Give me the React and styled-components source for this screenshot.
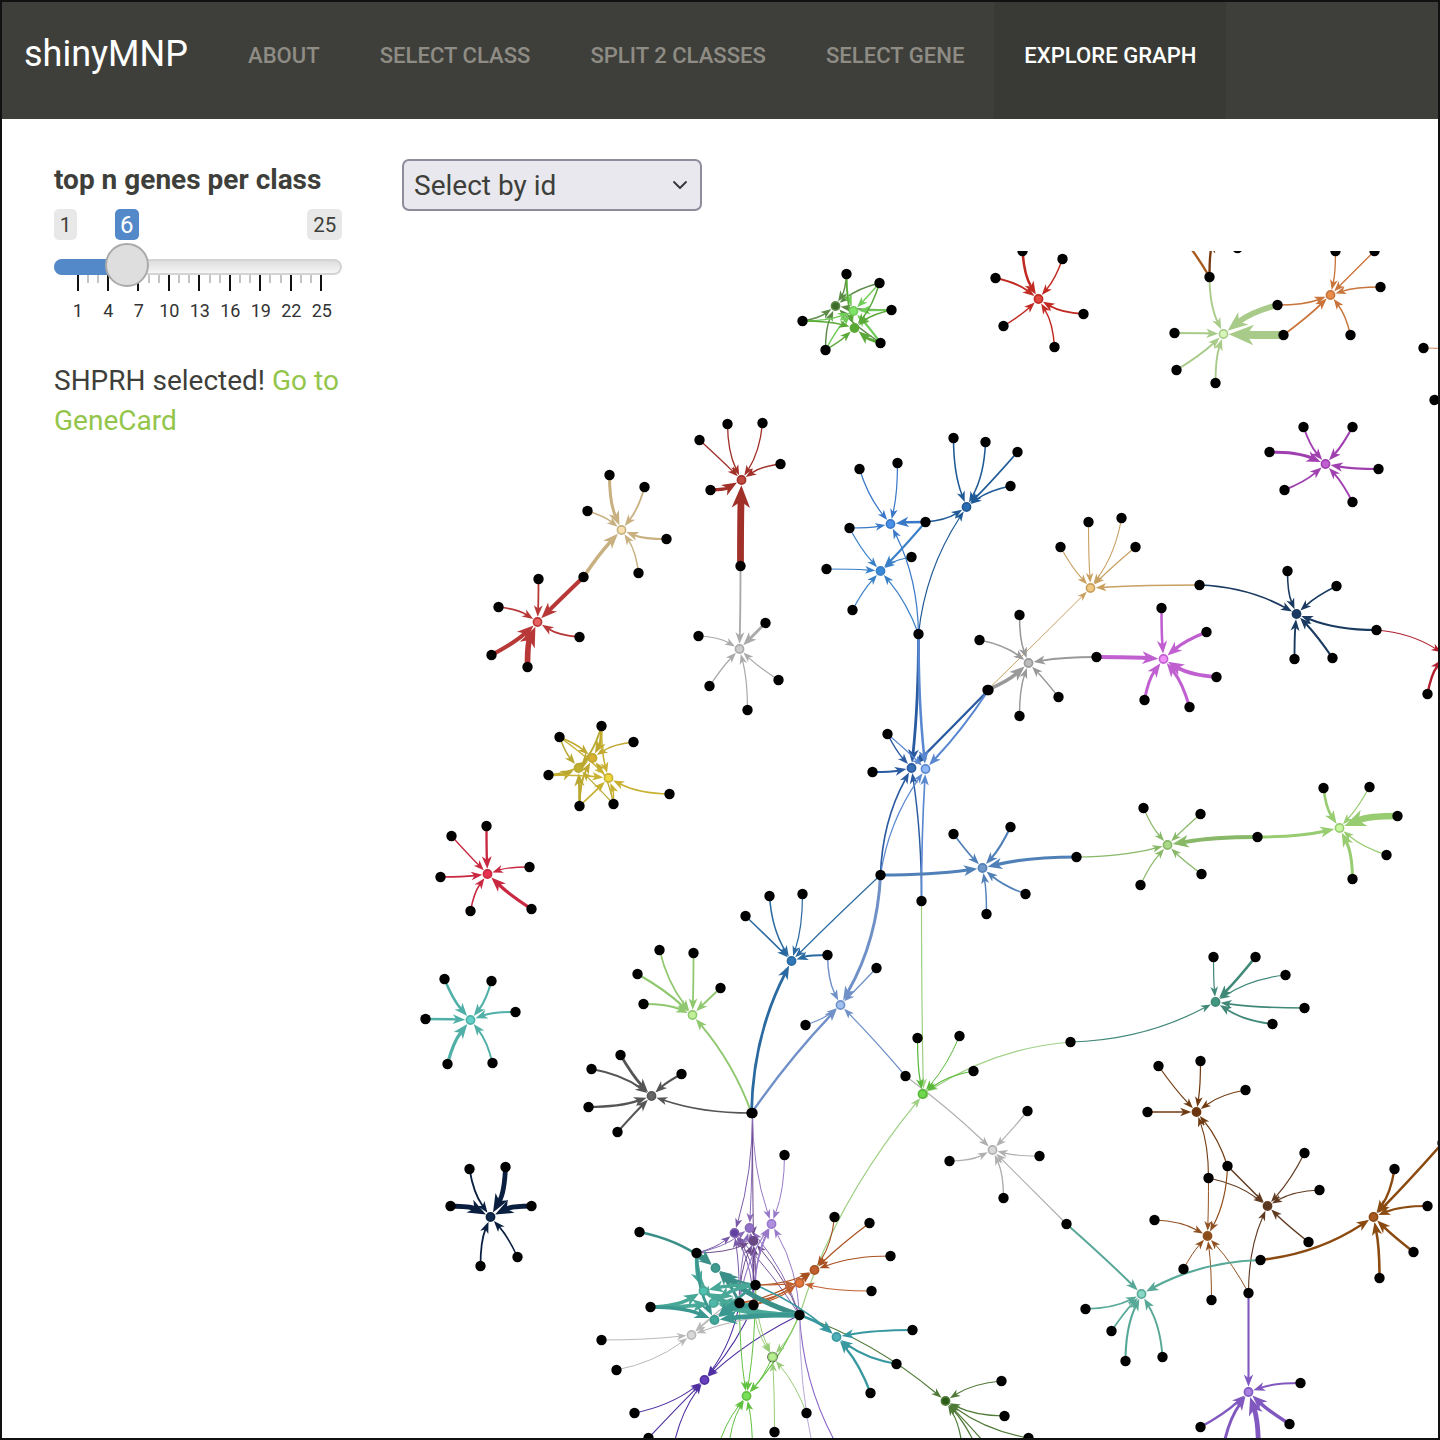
import React from "react";
import styled, { createGlobalStyle } from "styled-components";
import { ChevronDown } from "lucide-react";

const Global = createGlobalStyle`
  html, body { margin: 0; padding: 0; background: #fff; }
  body { font-family: Roboto, "Liberation Sans", sans-serif; color: #3e3f3a; }
`;

const Frame = styled.div`
  width: 1440px; height: 1440px; box-sizing: border-box;
  border: 2px solid #111; display: flex; flex-direction: column; overflow: hidden; background: #fff;
`;
const Navbar = styled.nav`
  height: 117px; flex: none; background: #3e3f3a; display: flex; align-items: stretch; padding-left: 22px;
`;
const Brand = styled.a`
  color: #fff; font-size: 36px; line-height: 104px; width: 194px; flex: none;
`;
const NavItem = styled.a`
  padding: 0 30px; font-size: 22.08px; font-weight: 500; line-height: 108px; text-transform: uppercase;
  color: ${p => (p.$active ? "#fff" : "#8e8c84")};
  background: ${p => (p.$active ? "#393a35" : "transparent")};
`;
const Content = styled.div`
  flex: 1; display: flex; min-height: 0;
`;
const Sidebar = styled.aside`
  width: 288px; flex: none; margin-left: 52px; padding-top: 41px;
`;
const Title = styled.div`
  font-size: 28px; font-weight: 700; line-height: 40px; margin-bottom: 9px;
`;
const Slider = styled.div`
  position: relative; width: 288px; height: 112px;
`;
const Badges = styled.div`
  display: flex; justify-content: space-between; height: 31px;
`;
const Badge = styled.span`
  background: #e8e8e8; color: #3e3f3a; font-size: 20.5px; line-height: 32px; height: 31px; padding: 0 5.8px; border-radius: 5px;
`;
const ValueBadge = styled(Badge)`
  position: absolute; left: 61px; top: 0; background: #5389c9; color: #fff; font-size: 24px; line-height: 33px; padding: 0 5px;
`;
const Track = styled.div`
  margin-top: 19px; height: 16px; box-sizing: border-box; border-radius: 8px; border: 2px solid #d4d4d4;
  background: linear-gradient(#dedede, #f6f6f6); position: relative;
`;
const Fill = styled.div`
  position: absolute; left: -2px; top: -2px; height: 16px; width: 73px; background: #5389c9; border-radius: 8px 0 0 8px;
`;
const Thumb = styled.div`
  position: absolute; left: 49px; top: -18px; width: 44px; height: 44px; box-sizing: border-box; border-radius: 50%;
  background: #dedede; border: 2px solid #aaa;
`;
const Ticks = styled.div`
  width: 246px; margin-left: 22.5px; display: flex; justify-content: space-between; align-items: flex-start;
`;
const Tick = styled.i`
  display: block; width: 2px; height: ${p => (p.$major ? "16px" : "8px")};
  background: ${p => (p.$major ? "#111" : "#c4c4c4")};
`;
const Scale = styled.div`
  display: grid; grid-template-columns: repeat(9, 30.5px); margin: 8px 0 0 8.5px; font-size: 18px; line-height: 24px; color: #333;
  text-align: center;
`;
const Message = styled.p`
  margin: 40px 0 0; font-size: 28px; line-height: 40px;
`;
const Link = styled.a`
  color: #93c54b;
`;
const Main = styled.main`
  flex: 1; min-width: 0; margin-left: 60px; display: flex; flex-direction: column; padding-top: 40px;
`;
const SelectBox = styled.div`
  width: 300px; height: 52px; flex: none; box-sizing: border-box; border: 2px solid #8e8c9c; border-radius: 7px;
  background: #e8e8ee; display: flex; align-items: center; justify-content: space-between; padding: 0 8px 0 10px;
  font-size: 28px; color: #3e3f3a;
`;
const Graph = styled.svg`
  display: block; width: 1037px; height: 1187px; margin-top: 40px; flex: none; margin-left: -1px;
`;

const H = (x, y, c, f, src) => ({ x, y, c, f, src });
const hubs = [
  // top-left green triple
  H(835,306,"#5a8a45","#3d6b2a",[[846,274],[879,283],[891,310],[802,321],[825,350],[880,343]]),
  H(853,311,"#70cc58","#7ee468",[[846,274,1.6],[879,283],[891,310,1.6],[802,321],[825,350],[880,343,2]]),
  H(854,328,"#5aa838","#58a832",[[846,274],[879,283],[891,310],[802,321],[825,350],[880,343,2.4]]),
  H(1038,299,"#c12a22","#e04a40",[[1022,251,2.2],[1062,259],[995,278,1.6],[1003,326],[1083,314,1.6],[1054,347]]),
  H(1223,334,"#a9cb8a","#d8f5b8",[[1209,277,1.6],[1277,305,5],[1283,335,7],[1174,333,1.8],[1176,370,1.6],[1215,383,1.6]]),
  H(1170,225,"#a85a1c","#a85a1c",[[1209,277,2]]),
  H(1214,235,"#7a3a10","#7a3a10",[[1209,277,2]]),
  H(1330,295,"#c9743a","#e88c4a",[[1277,305,1.4],[1283,335,1.6],[1335,251,1.1],[1374,251,1.1],[1380,287,1.2],[1350,335,1.2]]),
  H(1460,352,"#d89a70","#d89a70",[[1423,348,1]]),
  H(1325,464,"#a040b0","#c060d0",[[1303,427,1.6],[1352,427,1.8],[1269,452,2.6],[1378,469,1.8],[1284,490,1.6],[1352,502,1.6]]),
  H(966,507,"#1f5a96","#2a6cb0",[[953,438,1.3],[985,442,1.3],[1017,452,1.5],[1010,486,1.3],[925,522,1.2],[918,634,1]]),
  H(890,524,"#3a78c8","#4a90e8",[[859,469,1],[897,463,1],[849,528,1],[925,522,2.2],[918,634,1]]),
  H(880,571,"#3a80c8","#3a88d8",[[849,528,1],[826,569,1],[852,610,1],[925,522,1.8],[911,557,1],[918,634,1]]),
  H(1090,588,"#c8a060","#f0c880",[[1088,522,.9],[1121,518,.9],[1060,547,.9],[1135,547,1],[1199,585,1.2],[987,690,.8]]),
  H(1296,614,"#1a3a60","#1a3a60",[[1199,585,1.4],[1287,571,1.3],[1336,586,1.3],[1376,630,1.6],[1294,659,1.6],[1332,658,1.8]]),
  H(1028,663,"#999999","#bbbbbb",[[1019,615,1.3],[979,640,1.3],[1096,657,1.6],[987,690,3],[1058,697,1.2],[1019,716,1.2]]),
  H(1163,659,"#c060d0","#f090f8",[[1161,608,2.2],[1206,632,2.8],[1096,657,3.4],[1216,677,3.4],[1144,700,2.6],[1189,707,2.6]]),
  H(1445,655,"#b02030","#b02030",[[1376,630,.9],[1427,694,2]]),
  H(621,530,"#c8b080","#f8e0b0",[[609,475,2.6],[644,487,1.5],[587,511,1.2],[666,539,1.8],[638,573,1.2],[583,577,3]]),
  H(537,622,"#b83838","#e86060",[[538,579,1.5],[498,607,1.4],[583,577,3.4],[579,637,1.6],[491,655,3.6],[527,667,5]]),
  H(741,480,"#a03028","#c04a40",[[727,424,1.1],[762,423,1.1],[699,440,1.1],[780,464,1.2],[710,490,3],[740,566,6]]),
  H(739,649,"#aaaaaa","#cccccc",[[740,566,1.6],[765,623,2.4],[698,636,1],[709,686,1.1],[778,680,1],[747,710,1]]),
  H(592,758,"#c0a830","#d8b030",[[601,726,2.2],[559,737,1.3],[633,742,1.3],[548,775,1.2],[579,806,1.6],[613,804,1.2]]),
  H(578,768,"#b8a830","#c0b030",[[601,726,1.6],[559,737,1.3],[548,775,2.2],[579,806,2.2],[613,804,1]]),
  H(608,778,"#c8b030","#f0d840",[[601,726,1.3],[559,737,1.2],[548,775,1.4],[579,806,1.4],[613,804,1.3],[669,794,1.4]]),
  H(487,874,"#c82840","#e83050",[[451,836,1.1],[486,826,2],[529,867,1.2],[440,877,1.4],[470,911,1.3],[531,909,2.8]]),
  H(470,1020,"#50b0a8","#60d0c8",[[444,979,2.2],[491,981,1.8],[515,1012,1.8],[425,1019,2],[447,1064,2.8],[492,1063,1.6]]),
  H(490,1217,"#0a1f40","#0f2a4a",[[469,1169,1.5],[505,1167,4.2],[450,1206,4.2],[531,1206,4.2],[480,1266,1.5],[517,1257,1.4]]),
  H(692,1015,"#90c870","#c0f098",[[659,950,1.4],[693,953,1.5],[637,974,1.8],[720,988,1.6],[643,1004,1.6],[751,1113,1.6]]),
  H(651,1096,"#555555","#666666",[[620,1055,2.4],[591,1069,1.7],[681,1074,1.7],[588,1107,2],[617,1132,1.7],[751,1113,1.3]]),
  H(791,961,"#2a6aa0","#3078b8",[[745,916,1.3],[769,896,1.3],[802,894,1],[827,955,1.6],[880,875,1],[751,1113,2.4]]),
  H(840,1005,"#7090c8","#a0c0f0",[[827,955,1.2],[876,968,1.1],[805,1025,.9],[880,875,2.6],[751,1113,2],[905,1076,1]]),
  H(911,768,"#2a5aa0","#3a70b8",[[887,734,1.2],[872,772,1.6],[918,634,2.4],[988,690,2],[880,875,1.4],[921,901,1.2]]),
  H(925,769,"#5a88d0","#90b8f8",[[887,734,1],[918,634,2.2],[988,690,1.8],[880,875,1],[921,901,1.4]]),
  H(982,868,"#5080b8","#7098c8",[[953,834,1.4],[1010,827,1.8],[1025,894,1.4],[986,914,1.2],[880,875,2.4],[1076,857,2.8]]),
  H(1167,845,"#88b868","#a8d888",[[1143,808,1],[1200,814,1],[1076,857,1],[1257,837,3.4],[1201,874,1],[1140,885,1]]),
  H(1339,828,"#98cc70","#c8f8a0",[[1323,788,2.2],[1369,787,1],[1397,816,5.5],[1257,837,2.6],[1386,855,1],[1352,879,2.6]]),
  H(1215,1002,"#408878","#409880",[[1213,957,1],[1255,957,2.2],[1285,975,1],[1304,1008,1.4],[1272,1024,1.6],[1070,1042,1]]),
  H(1196,1112,"#703a10","#6a3410",[[1158,1066,1],[1200,1061,1],[1245,1090,1],[1147,1112,1.4],[1208,1178,.9],[1227,1166,1]]),
  H(1267,1206,"#603a20","#5a3820",[[1304,1153,1],[1319,1190,1],[1227,1166,1.2],[1208,1178,.9],[1308,1242,1.2],[1248,1293,.9]]),
  H(1207,1236,"#905020","#8a4c18",[[1154,1220,.9],[1208,1178,.8],[1227,1166,1],[1183,1269,.8],[1211,1300,.8],[1248,1293,.8]]),
  H(1373,1217,"#8b4a10","#a85a20",[[1394,1169,2],[1442,1143,2.2],[1427,1206,1.7],[1413,1252,2.2],[1379,1278,2.2],[1260,1260,2]]),
  H(1141,1294,"#58a898","#88d8c8",[[1066,1224,1.7],[1260,1260,1.9],[1085,1309,1.4],[1111,1331,1.4],[1125,1361,1.8],[1162,1357,1.6]]),
  H(1248,1392,"#8058c0","#a880e0",[[1248,1293,1.8],[1300,1383,1.6],[1200,1427,2],[1289,1424,3],[1222,1452,2.6],[1258,1452,4.2]]),
  H(992,1150,"#b0b0b0","#d8d8d8",[[949,1161,1],[1003,1198,1.2],[1027,1111,1],[1039,1156,1],[1066,1224,1],[905,1076,1]]),
  H(923,1094,"#9ed084","#70d850",[[921,901,1],[1070,1042,1],[799,1315,1]]),
  H(922,1094,"#58b838","#70d850",[[917,1038,1],[959,1036,.8],[973,1071,1]]),
  // bottom cluster
  H(704,1380,"#5030a0","#6840c0",[[634,1413,.9],[648,1438,.9],[672,1452,.9],[739,1303,.9],[753,1305,.9],[799,1315,.9]]),
  H(845,1460,"#8a68c8","#8a68c8",[[799,1315,.9]]),
  H(815,1460,"#b8a8d8","#b8a8d8",[[799,1315,.8]]),
  H(734,1233,"#7a5aa8","#6040a0",[[752,1113,.8],[696,1253,.8],[755,1285,.8],[739,1303,.8],[753,1305,.8],[799,1315,.8]]),
  H(749,1228,"#8a6ab8","#9070c8",[[752,1113,.8],[696,1253,.8],[755,1285,.8],[739,1303,.8],[753,1305,.8],[799,1315,.8]]),
  H(753,1241,"#6a4a88","#684880",[[752,1113,.8],[696,1253,.8],[755,1285,.8],[739,1303,.8],[753,1305,.8],[799,1315,.8]]),
  H(771,1224,"#9878c8","#b090e0",[[752,1113,.8],[784,1155,.8],[755,1285,.9],[739,1303,.9],[753,1305,.9],[799,1315,.8]]),
  H(746,1396,"#60c040","#78e058",[[739,1303,.8],[755,1285,.8],[799,1315,1],[772,1357,.8],[716,1452,.8],[728,1452,.8],[752,1452,.8]]),
  H(772,1357,"#98cc78","#b8f090",[[755,1285,.8],[753,1305,.8],[799,1315,.8],[806,1413,.8],[774,1432,.8]]),
  H(945,1401,"#507a38","#2a5a18",[[1001,1381,1],[1004,1416,1],[799,1315,1],[1028,1438,1],[962,1452,1],[978,1452,1],[992,1452,1]]),
  H(691,1335,"#b8b8b8","#d8d8d8",[[601,1340,.8],[616,1370,.8],[739,1303,1],[799,1315,.9],[755,1285,1]]),
  H(814,1270,"#a85020","#c06030",[[834,1217,.9],[869,1223,1],[890,1256,1],[755,1285,.9],[739,1303,1],[753,1305,1]]),
  H(799,1283,"#c06030","#e07840",[[871,1291,.9],[755,1285,1],[739,1303,1],[753,1305,1]]),
  H(836,1337,"#3898a0","#50b0b8",[[912,1330,1.8],[896,1364,1.8],[870,1393,2],[799,1315,2.4],[755,1285,1.4]]),
  H(715,1268,"#3a9088","#3f9a90",[[696,1253,3],[639,1232,2],[799,1315,4.5],[755,1285,2],[739,1303,2.4]]),
  H(703,1291,"#48a898","#50c0b0",[[696,1253,3],[650,1307,3],[799,1315,3],[755,1285,3],[739,1303,3],[753,1305,2.4]]),
  H(713,1303,"#4aa898","#50b8a8",[[696,1253,2],[650,1307,3.4],[799,1315,4.5],[755,1285,3],[739,1303,3],[753,1305,3.4]]),
  H(714,1320,"#3a9890","#3fa898",[[696,1253,2.4],[650,1307,3],[799,1315,4],[755,1285,2.4],[739,1303,2.4],[753,1305,3]]),
];
const lonely = [[1434,400],[1237,248]];

const R = 4.9;
function edge(sx, sy, hub, w0 = 1.2) {
  const w = w0 * 1.12 + 0.1;
  const dx = hub.x - sx, dy = hub.y - sy;
  const ax = Math.abs(dx), ay = Math.abs(dy);
  const k = Math.min(1, (Math.abs(ax - ay) / (ax + ay)) * 1.6);
  const mx = sx + dx / 2, my = sy + dy / 2;
  const axX = ax >= ay ? mx : sx, axY = ax >= ay ? sy : my;
  const vx = mx + (axX - mx) * k, vy = my + (axY - my) * k;
  const l = Math.hypot(hub.x - vx, hub.y - vy) || 1;
  const ux = (hub.x - vx) / l, uy = (hub.y - vy) / l;
  const tipX = hub.x - ux * (R + 0.3), tipY = hub.y - uy * (R + 0.3);
  const L = 7.5 + w * 2.2, W = 2.7 + w * 0.95;
  const bx = tipX - ux * L, by = tipY - uy * L;
  const nx = tipX - ux * L * 0.72, ny = tipY - uy * L * 0.72;
  const f = n => n.toFixed(1);
  return {
    w,
    d: `M${f(sx)} ${f(sy)}Q${f(vx)} ${f(vy)} ${f(nx)} ${f(ny)}`,
    arrow: `${f(tipX)},${f(tipY)} ${f(bx - uy * W)},${f(by + ux * W)} ${f(nx)},${f(ny)} ${f(bx + uy * W)},${f(by - ux * W)}`,
  };
}

function NetworkGraph() {
  const blacks = new Map();
  hubs.forEach(h => h.src.forEach(([x, y]) => blacks.set(`${x},${y}`, [x, y])));
  lonely.forEach(([x, y]) => blacks.set(`${x},${y}`, [x, y]));
  return (
    <Graph viewBox="400.5 251 1037 1187">
      <g fill="none" strokeLinecap="round">
        {hubs.map((h, i) =>
          h.src.map(([x, y, w], j) => {
            const e = edge(x, y, h, w);
            return (
              <g key={`${i}-${j}`}>
                <path d={e.d} stroke={h.c} strokeWidth={e.w} />
                <polygon points={e.arrow} fill={h.c} />
              </g>
            );
          })
        )}
      </g>
      {[...blacks.values()].map(([x, y]) => (
        <circle key={`${x}-${y}`} cx={x} cy={y} r="5.2" fill="#000" />
      ))}
      {hubs.map((h, i) => (
        <circle key={i} cx={h.x} cy={h.y} r="4.1" fill={h.f} stroke={h.c} strokeWidth="1.6" />
      ))}
    </Graph>
  );
}

const nav = ["About", "Select Class", "Split 2 Classes", "Select Gene", "Explore Graph"];
const labels = [1, 4, 7, 10, 13, 16, 19, 22, 25];

export default function App() {
  return (
    <>
      <Global />
      <Frame>
        <Navbar>
          <Brand>shinyMNP</Brand>
          {nav.map((n, i) => (
            <NavItem key={n} $active={i === 4}>{n}</NavItem>
          ))}
        </Navbar>
        <Content>
          <Sidebar>
            <Title>top n genes per class</Title>
            <Slider>
              <Badges>
                <Badge>1</Badge>
                <Badge>25</Badge>
              </Badges>
              <ValueBadge>6</ValueBadge>
              <Track>
                <Fill />
                <Thumb />
              </Track>
              <Ticks>
                {Array.from({ length: 25 }, (_, i) => (
                  <Tick key={i} $major={i % 3 === 0} />
                ))}
              </Ticks>
              <Scale>
                {labels.map(l => <span key={l}>{l}</span>)}
              </Scale>
            </Slider>
            <Message>SHPRH selected! <Link>Go to GeneCard</Link></Message>
          </Sidebar>
          <Main>
            <SelectBox>
              Select by id
              <ChevronDown size={24} strokeWidth={1.8} color="#333" />
            </SelectBox>
            <NetworkGraph />
          </Main>
        </Content>
      </Frame>
    </>
  );
}
